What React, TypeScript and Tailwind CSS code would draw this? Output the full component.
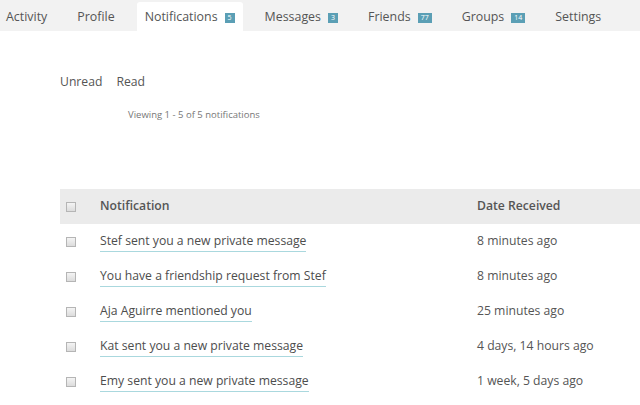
import React from "react";

const tabs = [
  { label: "Activity" },
  { label: "Profile" },
  { label: "Notifications", count: "5", active: true },
  { label: "Messages", count: "3" },
  { label: "Friends", count: "77" },
  { label: "Groups", count: "14" },
  { label: "Settings" },
];

const rows = [
  ["Stef sent you a new private message", "8 minutes ago"],
  ["You have a friendship request from Stef", "8 minutes ago"],
  ["Aja Aguirre mentioned you", "25 minutes ago"],
  ["Kat sent you a new private message", "4 days, 14 hours ago"],
  ["Emy sent you a new private message", "1 week, 5 days ago"],
];

function Box() {
  return (
    <span className="block h-[10px] w-[10px] border border-[#b5b5b5] bg-gradient-to-b from-[#f4f4f4] to-[#dcdcdc]" />
  );
}

export default function App() {
  return (
    <div className="h-[405px] w-[640px] overflow-hidden bg-white font-['Open_Sans',sans-serif] text-[#555]">
      {/* item nav */}
      <nav className="flex h-[31px] items-end gap-[14px] bg-[#f2f2f2] text-[12.4px]">
        {tabs.map((t, i) => (
          <div
            key={t.label}
            className={
              "flex shrink-0 items-center px-[8px] " +
              (i === 0 ? "-ml-[2px] " : "") +
              (t.active ? "h-[29px] rounded-t-[3px] bg-white pt-[2px]" : "h-[31px] pt-[4px]")
            }
          >
            <span>{t.label}</span>
            {t.count && (
              <span className="ml-[7px] flex h-[10px] min-w-[10px] items-center justify-center bg-[#5b9fb5] px-[3px] text-[7px] leading-none text-white">
                {t.count}
              </span>
            )}
          </div>
        ))}
      </nav>

      <div className="px-[60px]">
        <div className="mt-[41px] flex gap-[14px] text-[12.2px] leading-[20px]">
          <span>Unread</span>
          <span>Read</span>
        </div>
        <p className="mt-[16px] pl-[68px] text-[9.5px] leading-[14px] text-[#777]">
          Viewing 1 - 5 of 5 notifications
        </p>

        <table className="mt-[67px] w-[640px] border-collapse text-[12.2px]">
          <thead>
            <tr className="h-[35px] bg-[#ebebeb] text-left">
              <th className="w-[40px] pl-[6px]">
                <Box />
              </th>
              <th className="w-[377px] font-semibold">Notification</th>
              <th className="font-semibold">Date Received</th>
            </tr>
          </thead>
          <tbody>
            {rows.map(([text, date]) => (
              <tr key={text} className="h-[35px]">
                <td className="pl-[6px]">
                  <Box />
                </td>
                <td>
                  <a className="border-b border-[#aad8de] pb-[2px] text-[#4d4d4d]">{text}</a>
                </td>
                <td>{date}</td>
              </tr>
            ))}
          </tbody>
        </table>
      </div>
    </div>
  );
}
